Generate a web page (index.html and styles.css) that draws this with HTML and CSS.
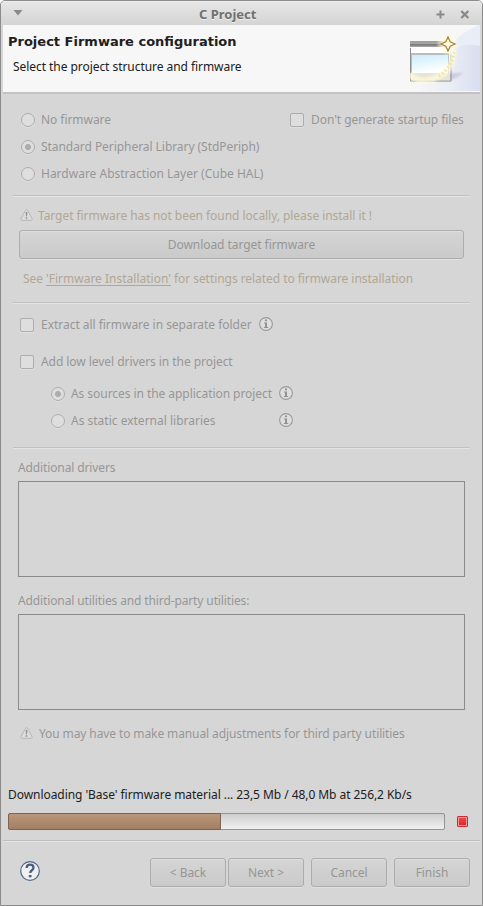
FILE: index.html
```html
<!DOCTYPE html>
<html lang="en">
<head>
<meta charset="utf-8">
<title>C Project</title>
<link rel="stylesheet" href="styles.css">
</head>
<body>
<svg width="0" height="0" class="defs">
  <symbol id="info" viewBox="0 0 14 14"><circle cx="7" cy="7" r="6.400" fill="#dedede" stroke="#9a9a9a" stroke-width="1.100"/><path d="M6 2.600h2v1.700H6zM5 5.500h3v4.500h1.200v1H4.900v-1H6V6.500H5z" fill="#929292"/></symbol>
  <symbol id="warn" viewBox="0 0 13 12"><path d="M6.500.7C7 .7 7.300 1 7.600 1.500L12 9.500C12.500 10.700 12 11.300 11 11.300H2C1 11.300.500 10.700 1 9.500L5.400 1.500C5.700 1 6 .7 6.500.7Z" fill="#dcdcdc" stroke="#b3b3b0" stroke-width=".9"/><path d="M5.600 3h1.800L7 7.500H6zM5.700 8.200h1.600v1.500H5.700z" fill="#93938f"/></symbol>
</svg>
<main class="window">
  <header class="titlebar">
    <svg class="menu" width="10" height="6"><path d="M.5 0h9L5 5.500z" fill="#8b8b8b"/></svg>
    <h1>C Project</h1>
    <svg class="max" width="9" height="9"><path d="M4.500.5v8M.5 4.500h8" stroke="#898989" stroke-width="2"/></svg>
    <svg class="close" width="10" height="9"><path d="M1.300 1l7 7M8.300 1l-7 7" stroke="#898989" stroke-width="2.300"/></svg>
  </header>
  <section class="banner">
    <div>
      <h2>Project Firmware configuration</h2>
      <p>Select the project structure and firmware</p>
    </div>
    <svg class="art" width="83" height="66" viewBox="0 0 83 66">
      <defs>
        <linearGradient id="sky" x2=".3" y2="1"><stop stop-color="#c9edfc"/><stop offset="1" stop-color="#fff"/></linearGradient>
        <linearGradient id="bar" x2="0" y2="1"><stop stop-color="#999"/><stop offset=".4" stop-color="#aaa"/><stop offset=".6" stop-color="#777"/><stop offset="1" stop-color="#aaa"/></linearGradient>
        <linearGradient id="swoop"><stop stop-color="#f7f7f7"/><stop offset=".5" stop-color="#eceef6"/><stop offset="1" stop-color="#d8def0"/></linearGradient>
        <radialGradient id="halo"><stop stop-color="#fffef2"/><stop offset=".5" stop-color="#fffce6"/><stop offset="1" stop-color="#fffce6" stop-opacity="0"/></radialGradient>
        <filter id="soft" x="-30%" y="-30%" width="160%" height="160%"><feGaussianBlur stdDeviation="1.300"/></filter>
      </defs>
      <path d="M83 0C62 9 50 28 20 66H83z" fill="url(#swoop)"/>
      <path d="M83 0C67 6 58 13 50 26C62 20 74 19 83 21z" fill="#e9edf7"/>
      <path d="M15 54L53 56L67 48L56 48z" fill="#aaa6bd" opacity=".45" filter="url(#soft)"/>
      <path d="M13 16h40v40H13z" fill="#f8f7ef"/>
      <path d="M13 16h40v6H13z" fill="url(#bar)"/>
      <path d="M14 22h38v6H14z" fill="#fff"/>
      <path d="M14 28h38v20H14z" fill="#bbb"/>
      <path d="M15 30h36v18H15z" fill="url(#sky)"/>
      <path d="M15 48h38v7H15z" fill="#e8e4d5"/>
      <path d="M13.500 23v33H54V29" fill="none" stroke="#8f8f8f"/>
      <path d="M12 49C20 58 34 57 46 49C54 43 57 35 56 25" fill="none" stroke="#fffbdc" stroke-width="6" opacity=".75" filter="url(#soft)"/>
      <path d="M42 51C50 46 57 37 57 25" fill="none" stroke="#f1e2a8" stroke-width="3" stroke-dasharray="1.500 2.500"/>
      <circle cx="51" cy="19" r="12" fill="url(#halo)" opacity=".8"/>
      <path d="M51 12L53.200 16.800L58 19L53.200 21.200L51 26L48.800 21.200L44 19L48.800 16.800Z" fill="#fffbe8" stroke="#ad8535" stroke-width="1.300"/>
    </svg>
  </section>
  <section class="content">
    <div class="row split"><label class="opt"><i class="radio"></i><span>No firmware</span></label><label class="opt startup"><i class="check"></i><span>Don't generate startup files</span></label></div>
    <div class="row"><i class="radio on"></i><span>Standard Peripheral Library (StdPeriph)</span></div>
    <div class="row cube"><i class="radio"></i><span>Hardware Abstraction Layer (Cube HAL)</span></div>
    <hr class="rule-a">
    <div class="note tan"><svg class="warn"><use href="#warn"/></svg><span>Target firmware has not been found locally, please install it !</span></div>
    <button class="download">Download target firmware</button>
    <p class="link tan">See <u>'Firmware Installation'</u> for settings related to firmware installation</p>
    <hr class="rule-b">
    <div class="row extract"><i class="check"></i><span>Extract all firmware in separate folder</span><svg class="info"><use href="#info"/></svg></div>
    <div class="row add"><i class="check"></i><span>Add low level drivers in the project</span></div>
    <div class="row sub first"><i class="radio on"></i><span>As sources in the application project</span><svg class="info"><use href="#info"/></svg></div>
    <div class="row sub static"><i class="radio"></i><span>As static external libraries</span><svg class="info"><use href="#info"/></svg></div>
    <hr class="rule-c">
    <h3>Additional drivers</h3>
    <div class="list"></div>
    <h3 class="second">Additional utilities and third-party utilities:</h3>
    <div class="list"></div>
    <div class="note manual"><svg class="warn"><use href="#warn"/></svg><span>You may have to make manual adjustments for third party utilities</span></div>
  </section>
  <section class="progress">
    <p>Downloading 'Base' firmware material ... 23,5 Mb / 48,0 Mb at 256,2 Kb/s</p>
    <div class="meter"><div class="track"><div class="fill"></div></div><i class="stop"></i></div>
  </section>
  <footer>
    <svg class="help" width="22" height="22" viewBox="0 0 22 22"><circle cx="11" cy="11" r="9.300" fill="#f0f0f0" stroke="#53658a" stroke-width="1.200"/><path d="M7.700 8C7.700 5.600 9.100 4.700 11 4.700C13.200 4.700 14.500 5.900 14.500 7.700C14.500 10.200 11.200 10.300 11.200 13" fill="none" stroke="#4a5d85" stroke-width="2.300"/><path d="M9.800 15h2.700v2.300H9.800z" fill="#4a5d85"/></svg>
    <button>&lt; Back</button><button class="next">Next &gt;</button><button class="cancel">Cancel</button><button class="finish">Finish</button>
  </footer>
</main>
</body>
</html>
```
FILE: styles.css
```css
* { box-sizing: border-box; }
body { margin: 0; background: #fff; font: 12px/18px "Noto Sans", sans-serif; color: #969696; letter-spacing: -0.055px; }
h1, h2, h3, p { margin: 0; font-size: 12px; font-weight: 400; white-space: nowrap; }
.defs { position: absolute; }
.window { width: 483px; height: 906px; background: #d6d6d6; border: 1px solid #8b8b8b; border-radius: 5px 5px 0 0; overflow: hidden; }
.titlebar { height: 24px; display: flex; align-items: center; background: linear-gradient(#e6e6e6, #d4d4d4); border-top: 1px solid #eee; padding-left: 12px; }
.titlebar h1 { font-weight: 700; font-size: 13px; letter-spacing: 0; color: #707070; margin: 1px 0 0 176px; width: 60px; text-shadow: 0 1px #eee; }
.menu { margin-top: -1px; }
.titlebar .max { margin-left: 177px; margin-top: 1px; }
.titlebar .close { margin-left: 15px; margin-top: 1px; }
.banner { margin: 0 2px; height: 69px; background: #f7f7f7; border-bottom: 2px solid #c2c2c2; display: flex; color: #202020; justify-content: space-between; }
.banner h2 { font: bold 13px/18px "DejaVu Sans", sans-serif; letter-spacing: 0; margin: 8px 0 0 5px; }
.banner p { margin: 7px 0 0 10px; }
.content { padding: 12px 12px 0; }
.row { height: 27px; display: flex; align-items: center; padding-left: 7px; white-space: nowrap; }
.opt { display: flex; align-items: center; }
.startup { width: 175px; }
.split { justify-content: space-between; padding-right: 5px; }
.radio, .check { width: 14px; height: 14px; border: 1px solid #adadad; background: #dedede; box-shadow: 0 1px #e0e0e0; margin: 1px 6px 0 1px; flex: none; }
.radio { border-radius: 50%; }
.check { border-radius: 2px; margin: 1px 7px 0 0; }
.radio.on { background: radial-gradient(circle, #adadad 0 2.7px, #dedede 3.3px); }
.cube, .static { letter-spacing: 0; }
hr { height: 2px; border: 0; background: linear-gradient(#c1c1c1 50%, #e4e4e4 50%); margin: 8px 0 0; }
.note { height: 26px; margin-top: 5px; display: flex; align-items: center; padding-left: 7px; white-space: nowrap; }
.note span { margin-top: 2px; }
.tan { color: #b0a794; }
.warn { width: 13px; height: 12px; margin-right: 5px; }
button { font: 12px/18px "Noto Sans", sans-serif; color: #969696; letter-spacing: -0.055px; background: linear-gradient(#d5d5d5, #cacaca); border: 1px solid #adadad; border-radius: 3px; box-shadow: 0 1px #e0e0e0, inset 0 1px #dedede; padding: 0; height: 29px; display: block; }
.download { width: 445px; margin: 2px 0 0 6px; }
.link { margin: 6px 0 0 10px; height: 26px; line-height: 28px; }
.link u { text-underline-offset: 2px; text-decoration-skip-ink: none; letter-spacing: 0; }
.rule-b { margin-top: 11px; }
.extract { margin-top: 7px; letter-spacing: -0.03px; }
.add { margin-top: 10px; }
.info { width: 14px; height: 14px; margin: -1px 0 0 7px; }
.sub { padding-left: 37px; }
.sub.first { margin-top: 5px; }
.sub span { width: 201px; }
.rule-c { margin-top: 13px; }
h3 { margin: 5px 0 0 5px; height: 27px; line-height: 28px; letter-spacing: -0.12px; }
h3.second { margin-top: 10px; }
.list { height: 96px; width: 447px; margin-left: 5px; border: 1px solid #8b8b8b; }
.manual { margin-top: 10px; letter-spacing: -0.105px; }
.manual .warn { margin-right: 6px; }
.progress { margin-top: 35px; padding: 0 0 0 7px; color: #202020; }
.progress p { height: 27px; line-height: 28px; }
.meter { display: flex; align-items: center; margin-top: 5px; }
.track { width: 437px; height: 17px; border: 1px solid #949494; border-radius: 2px; background: linear-gradient(#cecece, #f0f0f0); }
.fill { width: 213px; height: 17px; margin: -1px; border: 1px solid #7e634d; border-radius: 2px 0 0 2px; background: linear-gradient(#ba967a, #a27e63); }
.stop { width: 11px; height: 11px; margin-left: 12px; border: 1px solid #c52d34; border-radius: 1px; background: linear-gradient(#ed4b50, #e01f2b); box-shadow: inset 0 0 0 1px #f19a93; }
footer { margin: 10px 2px 0; height: 64px; border-top: 1px solid #bebebe; box-shadow: inset 0 1px #e4e4e4; display: flex; padding: 17px 0 0 16px; }
footer button { width: 76px; }
.help { margin: 2px 109px 0 0; flex: none; }
.next { margin-left: 2px; }
.cancel, .finish { margin-left: 7px; }
```
